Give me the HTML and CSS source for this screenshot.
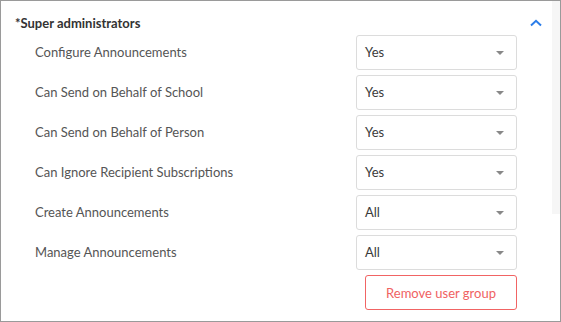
FILE: index.html
```html
<!DOCTYPE html>
<html>
<head>
<meta charset="utf-8">
<link rel="stylesheet" href="styles.css">
</head>
<body>
<div class="panel">
  <div class="track"></div>
  <div class="header">
    <span class="title">*Super administrators</span>
    <svg class="chev" width="12" height="8" viewBox="0 0 12 8"><path d="M1 6.5 L6 1.8 L11 6.5" fill="none" stroke="#2b7de9" stroke-width="2"/></svg>
  </div>
  <div class="rows">
    <div class="row"><span class="label">Configure Announcements</span><div class="select"><span>Yes</span><i class="caret"></i></div></div>
    <div class="row"><span class="label">Can Send on Behalf of School</span><div class="select"><span>Yes</span><i class="caret"></i></div></div>
    <div class="row"><span class="label">Can Send on Behalf of Person</span><div class="select"><span>Yes</span><i class="caret"></i></div></div>
    <div class="row"><span class="label">Can Ignore Recipient Subscriptions</span><div class="select"><span>Yes</span><i class="caret"></i></div></div>
    <div class="row"><span class="label">Create Announcements</span><div class="select"><span>All</span><i class="caret"></i></div></div>
    <div class="row"><span class="label">Manage Announcements</span><div class="select"><span>All</span><i class="caret"></i></div></div>
    <div class="actions"><button class="remove">Remove user group</button></div>
  </div>
</div>
</body>
</html>
```
FILE: styles.css
```css
html, body { margin: 0; padding: 0; background: #fff; }
body { font-family: Lato, "Open Sans", sans-serif; font-size: 13px; color: #555; }
.panel {
  position: relative;
  width: 561px; height: 322px;
  box-sizing: border-box;
  border: 1px solid #9a9a9a;
  overflow: hidden;
}
.track {
  position: absolute; top: 0; right: 0;
  width: 8px; height: 213px;
  background: #f6f6f6;
}
.header {
  display: flex; align-items: center; justify-content: space-between;
  height: 20px;
  padding: 12px 18px 0 14px;
}
.title { font-weight: bold; color: #333; }
.chev { display: block; }
.rows {
  display: flex; flex-direction: column; gap: 5px;
  padding: 2px 43px 0 34px;
}
.row {
  display: flex; align-items: center; justify-content: space-between;
  height: 35px;
}
.label { color: #555; line-height: 16px; margin-top: -1px; }
.select {
  width: 161px; height: 35px;
  box-sizing: border-box;
  border: 1px solid #dcdcdc;
  border-radius: 3px;
  display: flex; align-items: center; justify-content: space-between;
  padding: 0 12px 0 8px;
  color: #3a3a3a;
}
.select span { line-height: 16px; margin-top: -1px; }
.caret {
  width: 0; height: 0;
  border-left: 4.5px solid transparent;
  border-right: 4.5px solid transparent;
  border-top: 4.5px solid #888;
}
.actions { display: flex; justify-content: flex-end; }
.remove {
  width: 152px; height: 35px;
  box-sizing: border-box;
  border: 1px solid #f16464;
  border-radius: 3px;
  background: #fff;
  color: #f06262;
  font-family: Lato, "Open Sans", sans-serif;
  font-size: 13px;
  padding: 0;
}
```
